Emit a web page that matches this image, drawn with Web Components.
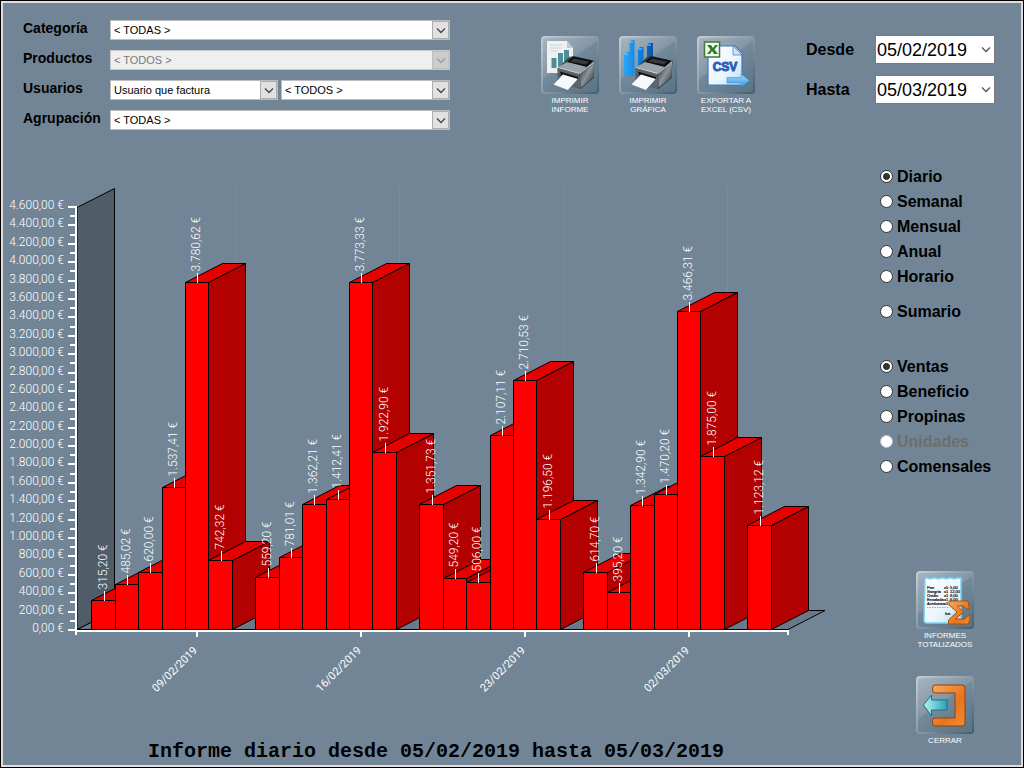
<!DOCTYPE html>
<html lang="es">
<head>
<meta charset="utf-8">
<title>Informe diario</title>
<style>
  body { margin: 0; background: #000; font-family: "Liberation Sans", Arial, sans-serif; color: #000; }
</style>
</head>
<body>
<report-screen>
  <filter-panel slot="filters"></filter-panel>
  <icon-button slot="tools" icon="printReport">IMPRIMIR<br>INFORME</icon-button>
  <icon-button slot="tools" icon="printChart">IMPRIMIR<br>GRÁFICA</icon-button>
  <icon-button slot="tools" icon="csv">EXPORTAR A<br>EXCEL (CSV)</icon-button>
  <date-field slot="dates" label="Desde" value="05/02/2019"></date-field>
  <date-field slot="dates" label="Hasta" value="05/03/2019"></date-field>
  <sales-chart slot="chart">Informe diario desde 05/02/2019 hasta 05/03/2019</sales-chart>
  <radio-group slot="options" name="periodo" selected="Diario" options="Diario|Semanal|Mensual|Anual|Horario|-|Sumario"></radio-group>
  <radio-group slot="options" name="medida" selected="Ventas" disabled-option="Unidades" options="Ventas|Beneficio|Propinas|Unidades|Comensales"></radio-group>
  <icon-button slot="actions" icon="totals">INFORMES<br>TOTALIZADOS</icon-button>
  <icon-button slot="actions" icon="exit">CERRAR</icon-button>
</report-screen>

<script>
const CHEVRON = '<path d="M1 1.5 5 5.5 9 1.5" fill="none" stroke="currentColor" stroke-width="1.3"/>';

function define(name, render, after) {
  customElements.define(name, class extends HTMLElement {
    connectedCallback() {
      if (this.shadowRoot) return;
      this.attachShadow({ mode: 'open' }).innerHTML = render(this);
      if (after) after(this);
    }
  });
}

/* ---------- window frame and page regions ---------- */
define('report-screen', () => `
<style>
  :host { display: flex; flex-direction: column; box-sizing: border-box; min-height: 100vh;
    border: 1px solid #000; outline: 2px solid #e0dcdf; outline-offset: -3px; padding: 2px; background: #728596; }
  header { display: grid; grid-template-columns: minmax(0, 427px) 1fr 189px; padding: 17px 26px 10px 20px; align-items: start; }
  .tools { display: flex; justify-content: flex-end; gap: 20px; padding: 16px 51px 0 0; }
  .dates { display: grid; gap: 11px; padding-top: 15px; }
  main { display: grid; grid-template-columns: minmax(0, 1fr) 144px; flex: 1; align-items: start; }
  aside { display: grid; gap: 30px; padding: 24px 0 0 3px; }
  .actions { display: grid; gap: 27px; justify-items: center; padding: 62px 11px 0 0; }
</style>
<header>
  <slot name="filters"></slot>
  <div class="tools"><slot name="tools"></slot></div>
  <div class="dates"><slot name="dates"></slot></div>
</header>
<main>
  <slot name="chart"></slot>
  <aside>
    <slot name="options"></slot>
    <div class="actions"><slot name="actions"></slot></div>
  </aside>
</main>`);

/* ---------- filters ---------- */
function combo(id, text, attrs = '') {
  return `<div class="combo"><select id="${id}" ${attrs}><option>${text}</option></select>
    <span class="drop"><svg width="10" height="7" viewBox="0 0 10 7">${CHEVRON}</svg></span></div>`;
}
define('filter-panel', () => `
<style>
  :host { display: grid; grid-template-columns: 87px minmax(0, 1fr); row-gap: 10px; }
  label { font: bold 14px/16px "Liberation Sans", Arial, sans-serif; }
  .pair { display: grid; grid-template-columns: 168fr 169fr; gap: 3px; }
  .combo { display: grid; grid-template-columns: minmax(0, 1fr) 18px; }
  select { grid-area: 1 / 1 / 2 / 3; appearance: none; box-sizing: border-box; width: 100%; height: 20px; margin: 0;
    padding: 0 20px 0 3px; border: 1px solid #bdbdbd; border-radius: 0; background: #fff; color: #000; opacity: 1;
    font: 11px/18px "Liberation Sans", Arial, sans-serif; }
  select:disabled { background: #efefef; color: #7a7a7a; border-color: #c8c8c8; }
  .drop { grid-area: 1 / 2; display: grid; place-items: center; box-sizing: border-box; width: 17px; height: 18px;
    margin-top: 1px; background: #e1e1e1; border: 1px solid #adadad; color: #444; pointer-events: none; z-index: 1; }
  select:disabled + .drop { background: #ccc; border-color: #bfbfbf; color: #9b9b9b; }
</style>
<label for="cat">Categoría</label>${combo('cat', '&lt; TODAS &gt;')}
<label for="pro">Productos</label>${combo('pro', '&lt; TODOS &gt;', 'disabled')}
<label for="usr">Usuarios</label><div class="pair">${combo('usr', 'Usuario que factura')}${combo('usr2', '&lt; TODOS &gt;', 'aria-label="Usuario"')}</div>
<label for="agr">Agrupación</label>${combo('agr', '&lt; TODAS &gt;')}`);

define('date-field', el => `
<style>
  :host { display: grid; grid-template-columns: 69px minmax(0, 1fr); align-items: center; }
  label { font: bold 16px/18px "Liberation Sans", Arial, sans-serif; }
  .box { display: flex; align-items: center; box-sizing: border-box; height: 29px; background: #fff; border: 1px solid #7a7a7a; padding-right: 3px; }
  input { flex: 1; min-width: 0; border: 0; padding: 0 0 0 1px; margin: 0; background: none; outline: 0; color: #000;
    font: 18px/24px "Liberation Sans", Arial, sans-serif; }
  svg { color: #555; }
</style>
<label for="d">${el.getAttribute('label')}</label>
<div class="box"><input id="d" type="text" value="${el.getAttribute('value')}">
<svg width="10" height="7" viewBox="0 0 10 7">${CHEVRON}</svg></div>`);

/* ---------- radio list ---------- */
define('radio-group', el => {
  const name = el.getAttribute('name'), off = el.getAttribute('disabled-option'), sel = el.getAttribute('selected');
  return `
<style>
  :host { display: block; }
  label { display: flex; align-items: center; gap: 4px; font: bold 16px/25px "Liberation Sans", Arial, sans-serif; }
  .gap { height: 10px; }
  input { appearance: none; box-sizing: border-box; width: 13px; height: 13px; margin: 0; border: 1px solid #333; border-radius: 50%; background: #fff; }
  input:checked { background: radial-gradient(circle, #333 3px, #fff 4px); }
  .off { color: #6d6d6d; }
  .off input { border-color: #b8c2cb; }
</style>` + el.getAttribute('options').split('|').map(o => o === '-' ? '<div class="gap"></div>' :
    `<label class="${o === off ? 'off' : ''}"><input type="radio" name="${name}" ${o === sel ? 'checked' : ''} ${o === off ? 'disabled' : ''}>${o}</label>`).join('');
});

/* ---------- picture buttons ---------- */
const PRINTER = `
  <path d="M17 32 29 20 53 26 53 42 39 53 16 46Z" fill="#23272b" opacity=".35"/>
  <path d="M16.500 33 27 22 33 20 53.500 25 52.500 42 39.500 53 36 46 17 39Z" fill="#3a4046"/>
  <path d="M17 31 28 25 46 30.500 38 37.500Z" fill="#9ba4ab"/>
  <path d="M26 26 32 20.500 52 24.500 46 31Z" fill="#0d0f11"/>
  <path d="M29 25.500 33 22.500 48 25.500 45 28.500Z" fill="#353b41"/>
  <path d="M38.500 37.500 53 26.500 52.500 41 40 51.500Z" fill="url(#side)"/>
  <path d="M16.500 32 38 38 39 46 17 38.500Z" fill="#59626a"/>
  <path d="M19 35.500 37 41 37 44.500 20 39Z" fill="#101214"/>
  <path d="M17 31.500 38.500 37.500 53 26" fill="none" stroke="#d3d9de" stroke-width="1"/>
  <path d="M22 38.500 37 43 27 54 12.500 48.500Z" fill="#f7f8f9"/>
  <path d="M27 54 37 43 39.500 46 39.500 52 33 50Z" fill="#5d666e"/>`;
const ICONS = {
  printReport: `
    <path d="M6 5h20l6 7v25H6z" fill="#eef1f2"/><path d="M26 5v7h6z" fill="#bfc9cd"/>
    <path d="M9 9h12M9 12h12M9 15h8" stroke="#cdd6da"/>
    <path d="M10.500 22h5v10h-5zM17 17h5v15h-5zM23 14h5v18h-5z" fill="#4f8e99"/>${PRINTER}`,
  printChart: `
    <g fill="url(#bar)"><path d="M5 18l2-2h3.500v24H5zM10.500 6l2-2h3v36h-5zM19 13l2-2h3.500v18H19zM28 9l2-2h4v20h-6z"/></g>
    <path d="M5 18h4M10.500 6h3.500M19 13h4M28 9h4" stroke="#7ed2ff"/>${PRINTER}`,
  csv: `
    <path d="M11 10h27l7 7v32H11z" fill="url(#paper)" stroke="#3e78c8" stroke-width="1.200"/>
    <path d="M36 10v9h9z" fill="#cfe2f8" stroke="#4b83cc" stroke-width=".800"/>
    <rect x="7.500" y="6" width="15" height="15" fill="#f4faf2" stroke="#3c7a35" stroke-width="1.500"/>
    <path d="M10 9h4l2 3 2-3h3l-3.500 4.500L21 18h-4l-2-3-2 3h-3l3.500-4.500z" fill="#2f7b31"/>
    <text x="28" y="35" text-anchor="middle" font-family="Liberation Sans, sans-serif" font-weight="bold" font-size="12" fill="#2b5fb9" stroke="#2b5fb9" stroke-width="1">CSV</text>
    <path d="M30 41.500h14V38l8.500 6.500L44 51v-4H30z" fill="url(#arrow)" stroke="#3d8fd8" stroke-width=".600"/>`,
  totals: `
    <path d="M9 7h3l2 1 3-1h3l2 1 3-1h3l2 1 3-1h3l2 1 3-1h4v42q0 3-3 3H11q-3 0-3-3z" fill="url(#paper)" stroke="#7fd0f4" stroke-width="1.500"/>
    <g font-family="Liberation Sans, sans-serif" font-size="4" fill="#111" stroke="#111" stroke-width=".200">
      <text x="11" y="18">Pan</text><text x="28" y="18">x5</text><text x="34" y="18">5,00</text>
      <text x="11" y="22">Sangría</text><text x="28" y="22">x1</text><text x="34" y="22">12,00</text>
      <text x="11" y="26">Ovidio</text><text x="28" y="26">x1</text><text x="34" y="26">8,00</text>
      <text x="11" y="30">Ensalada</text><text x="28" y="30">x1</text><text x="34" y="30">6,00</text>
      <text x="11" y="34">Aceitunas</text><text x="28" y="34">x1</text>
      <text x="29" y="44">Iva</text>
    </g>
    <path d="M11 36.500h22" stroke="#888" stroke-width=".700" stroke-dasharray="1.500 1"/>
    <path d="M33 30h19l1.500 8h-3l-3-3h-6l6 6-8 7h9l3-3h3l-2 8H32.500v-4l8.500-8-8-7z" fill="url(#orange)" stroke="#a4530c" stroke-width="1"/>`,
  exit: `
    <path d="M19 9h27q3 0 3 3v35q0 3-3 3H19q-2.500 0-2.500-3v-2q0-3 2.500-3h20V17H19q-2.500 0-2.500-3v-2q0-3 2.500-3z" fill="url(#orange)" stroke="#8a4410" stroke-width="1"/>
    <path d="M7.500 29 15.500 19v5H31v10H15.500v6z" fill="url(#cyan)" stroke="#1d7088" stroke-width="1"/>`
};
define('icon-button', el => `
<style>
  :host { display: block; width: 58px; }
  button { display: grid; justify-items: center; gap: 2px; width: 100%; padding: 0; border: 0; background: none; color: #fff;
    font: 8px/9px "Liberation Sans", Arial, sans-serif; cursor: pointer; }
  svg { display: block; width: 58px; height: 58px; }
  span { white-space: nowrap; }
</style>
<button type="button"><svg viewBox="0 0 58 58" aria-hidden="true">
  <defs>
    <linearGradient id="tile" x2=".7" y2="1"><stop stop-color="#a8b5c1"/><stop offset=".5" stop-color="#8496a5"/><stop offset=".52" stop-color="#748a9b"/><stop offset="1" stop-color="#5d7789"/></linearGradient>
    <linearGradient id="rim" x2="1" y2="1"><stop stop-color="#c3cdd5"/><stop offset=".45" stop-color="#8fa0ae"/><stop offset="1" stop-color="#425e72"/></linearGradient>
    <linearGradient id="side" x2="1" y2="1"><stop stop-color="#15181a"/><stop offset=".5" stop-color="#8b949b"/><stop offset="1" stop-color="#202428"/></linearGradient>
    <linearGradient id="bar" x2="1"><stop stop-color="#2ba6f5"/><stop offset=".6" stop-color="#0d79dd"/><stop offset="1" stop-color="#0753a6"/></linearGradient>
    <linearGradient id="paper" x2="1" y2="1"><stop stop-color="#fff"/><stop offset=".6" stop-color="#eaf5fd"/><stop offset="1" stop-color="#b4ddf6"/></linearGradient>
    <linearGradient id="arrow" x2="0" y2="1"><stop stop-color="#9fd8fb"/><stop offset="1" stop-color="#379be6"/></linearGradient>
    <linearGradient id="orange" x2="1" y2="1"><stop stop-color="#f9a860"/><stop offset=".6" stop-color="#ea741f"/><stop offset="1" stop-color="#f08a35"/></linearGradient>
    <linearGradient id="cyan" x2="1"><stop stop-color="#b4f3f7"/><stop offset="1" stop-color="#2aa3b4"/></linearGradient>
  </defs>
  <rect x="1" y="1" width="56" height="56" rx="3" fill="url(#tile)" stroke="url(#rim)" stroke-width="2"/>
  ${ICONS[el.getAttribute('icon')]}
</svg><span><slot></slot></span></button>`);

/* ---------- 3D bar chart ---------- */
const VALUES = [315.2, 485.02, 620, 1537.41, 3780.62, 742.32, 0, 559.2, 781.01, 1362.21, 1412.41, 3773.33, 1922.9, 0,
  1351.73, 549.2, 506, 2107.11, 2710.53, 1196.5, 0, 614.7, 395.2, 1342.9, 1470.2, 3466.31, 1875, 0, 1123.12];
const WEEKS = { 4: '09/02/2019', 11: '16/02/2019', 18: '23/02/2019', 25: '02/03/2019' };
const BASE = 489, TOP = 67, AXIS = 73, RIGHT = 785, DX = 37, DY = 19, STEP = 164 / 7;
const euro = v => { const [a, b] = v.toFixed(2).split('.'); return a.replace(/(\d)(?=\d{3}$)/, '$1.') + ',' + b + ' €'; };
const yOf = v => Math.floor(BASE - v * (BASE - TOP) / 4600) + 0.5;
const xOf = i => Math.round(88.3 + i * STEP) + 0.5;

function drawChart() {
  const b = BASE + 0.5;
  let out = `<g stroke="#000">
    <path d="M${AXIS + 1} ${b}H${RIGHT}L${RIGHT + DX} ${b - DY}H${AXIS + DX + 1}Z" fill="#69798a"/>
    <path d="M${AXIS + 1} ${TOP + .5}L${AXIS + DX + 1.5} ${TOP - DY + .5}V${b - DY}L${AXIS + 1} ${b}Z" fill="#505d69"/></g>
    <g stroke="#7189d8" stroke-dasharray="3 1">`;
  for (const i in WEEKS) out += `<path d="M${Math.round(101.6 + i * STEP) + DX + .5} 48V${b - DY}"/>`;
  out += '</g><g stroke="#000" stroke-linejoin="round">';
  VALUES.forEach((v, i) => {
    if (!v) return;
    const x = xOf(i), r = xOf(i + 1), y = yOf(v);
    out += `<path d="M${r} ${y}l${DX} ${-DY}V${b - DY}L${r} ${b}z" fill="#b30000"/>
      <path d="M${x} ${y}l${DX} ${-DY}H${r + DX}L${r} ${y}z" fill="#e60000"/>
      <path d="M${x} ${y}H${r}V${b}H${x}z" fill="#f00"/>`;
  });
  out += '</g><g fill="#fff">';
  VALUES.forEach((v, i) => {
    if (!v) return;
    const x = Math.round(100.6 + i * STEP), y = yOf(v);
    out += `<rect x="${x}" y="${y - 9.5}" width="1" height="10"/>
      <text class="amount" transform="translate(${x + 3} ${y - 11}) rotate(-90)">${euro(v)}</text>`;
  });
  out += `<rect x="${AXIS - 1}" y="66" width="2" height="429"/><rect x="${AXIS - 1}" y="490" width="${RIGHT - AXIS + 1}" height="2"/>
    <rect x="${RIGHT - 1}" y="490" width="2" height="5"/>`;
  for (let v = 0; v <= 4600; v += 100) {
    const y = Math.round(BASE - v * (BASE - 66) / 4600), major = v % 200 === 0;
    out += `<rect x="${major ? AXIS - 8 : AXIS - 6}" y="${y}" width="${major ? 8 : 6}" height="2"/>`;
    if (major) out += `<text class="amount" x="61" y="${y + 3}" text-anchor="end">${euro(v)}</text>`;
  }
  for (const i in WEEKS) {
    const x = Math.round(100.6 + i * STEP);
    out += `<rect x="${x - 1}" y="490" width="2" height="7"/>
      <text transform="translate(${x + 1} 511) rotate(-45)" text-anchor="end">${WEEKS[i]}</text>`;
  }
  return out + '</g>';
}
define('sales-chart', () => `
<style>
  :host, figure { display: block; margin: 0; }
  svg { display: block; width: 100%; height: auto; font: 11px Roboto, "Liberation Sans", sans-serif; }
  .amount { font-size: 12px; font-weight: 300; }
  figcaption { padding-right: 8px; text-align: center; white-space: nowrap; font: bold 20px/24px "Liberation Mono", "Courier New", monospace; }
</style>
<figure>
  <svg viewBox="0 0 874 600" role="img" aria-label="Ventas por día">${drawChart()}</svg>
  <figcaption><slot></slot></figcaption>
</figure>`);
</script>
</body>
</html>
